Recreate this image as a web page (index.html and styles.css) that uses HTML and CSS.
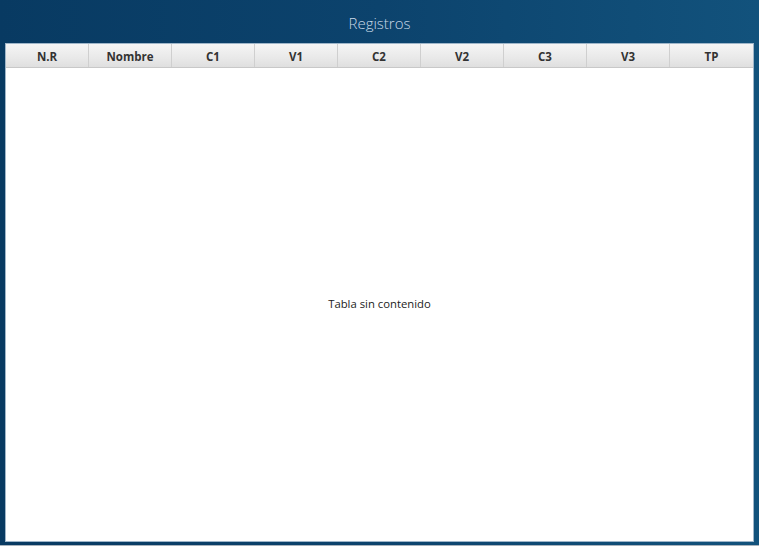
FILE: index.html
```html
<!DOCTYPE html>
<html>
<head>
<meta charset="utf-8">
<link rel="stylesheet" href="styles.css">
</head>
<body>
<div class="window">
  <div class="title">Registros</div>
  <div class="table">
    <div class="header">
      <div class="col">N.R</div>
      <div class="col">Nombre</div>
      <div class="col">C1</div>
      <div class="col">V1</div>
      <div class="col">C2</div>
      <div class="col">V2</div>
      <div class="col">C3</div>
      <div class="col">V3</div>
      <div class="col last">TP</div>
    </div>
    <div class="body">Tabla sin contenido</div>
  </div>
  <div class="bottom"></div>
</div>
</body>
</html>
```
FILE: styles.css
```css
html, body {
  margin: 0;
  padding: 0;
}
body {
  width: 759px;
  height: 546px;
  overflow: hidden;
  font-family: "Open Sans", "Noto Sans", sans-serif;
}
.window {
  width: 759px;
  height: 546px;
  display: flex;
  flex-direction: column;
  background: linear-gradient(90deg, #083a62 0%, #0c436d 50%, #12527c 100%);
}
.title {
  height: 43px;
  display: flex;
  align-items: center;
  justify-content: center;
  color: #c9d9e8;
  font-size: 15px;
  font-weight: 300;
  padding-top: 3px;
  box-sizing: border-box;
}
.table {
  margin: 0 5px 0 5px;
  width: 747px;
  height: 497px;
  background: #ffffff;
  border: 1px solid #9fb6c9;
  display: flex;
  flex-direction: column;
}
.header {
  display: grid;
  grid-template-columns: repeat(8, 83px) 1fr;
  height: 23px;
  background: linear-gradient(180deg, #f5f5f5 0%, #e9e9e9 60%, #dfdfdf 100%);
  border-bottom: 1px solid #c8c8c8;
}
.col {
  display: flex;
  align-items: center;
  justify-content: center;
  font-size: 11.5px;
  font-weight: 700;
  color: #333;
  border-right: 1px solid #cfcfcf;
  padding-top: 1px;
  box-sizing: border-box;
}
.col.last {
  border-right: none;
}
.body {
  flex: 1;
  display: flex;
  align-items: center;
  justify-content: center;
  font-size: 11.3px;
  color: #222;
  padding-bottom: 2px;
}
.bottom {
  margin-top: auto;
  height: 1px;
  background: #a9b3bc;
}
```
